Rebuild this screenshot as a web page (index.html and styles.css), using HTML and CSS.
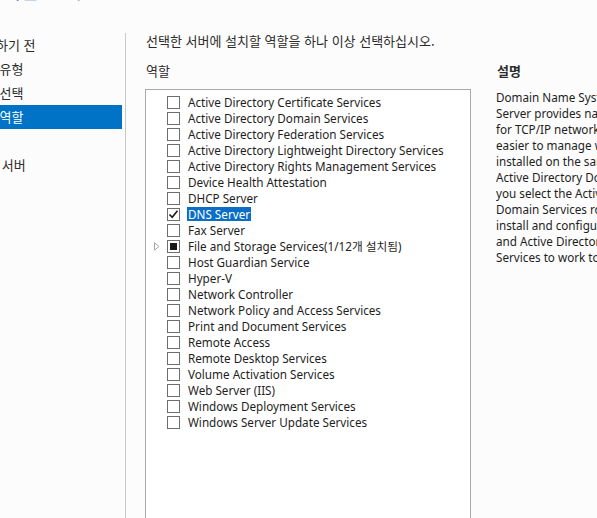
FILE: index.html
```html
<!DOCTYPE html>
<html lang="ko">
<head>
<meta charset="utf-8">
<link rel="stylesheet" href="styles.css">
</head>
<body>
<div class="page">
  <div class="header"><div class="title">서버 역할 선택</div></div>
  <div class="main">
    <nav class="nav">
      <div class="nav-item">시작하기 전</div>
      <div class="nav-item">설치 유형</div>
      <div class="nav-item">서버 선택</div>
      <div class="nav-item active">서버 역할</div>
      <div class="nav-item">기능</div>
      <div class="nav-item">DNS 서버</div>
    </nav>
    <section class="content">
      <div class="intro">선택한 서버에 설치할 역할을 하나 이상 선택하십시오.</div>
      <div class="columns">
        <div class="roles-col">
          <div class="label">역할</div>
          <div class="listbox">
            <div class="row"><span class="exp"></span><span class="cb"></span><span class="txt">Active Directory Certificate Services</span></div>
            <div class="row"><span class="exp"></span><span class="cb"></span><span class="txt">Active Directory Domain Services</span></div>
            <div class="row"><span class="exp"></span><span class="cb"></span><span class="txt">Active Directory Federation Services</span></div>
            <div class="row"><span class="exp"></span><span class="cb"></span><span class="txt">Active Directory Lightweight Directory Services</span></div>
            <div class="row"><span class="exp"></span><span class="cb"></span><span class="txt">Active Directory Rights Management Services</span></div>
            <div class="row"><span class="exp"></span><span class="cb"></span><span class="txt">Device Health Attestation</span></div>
            <div class="row"><span class="exp"></span><span class="cb"></span><span class="txt">DHCP Server</span></div>
            <div class="row"><span class="exp"></span><span class="cb"><svg class="check" width="11" height="11" viewBox="0 0 11 11"><path d="M1.5 5.5 L4.2 8.3 L9.5 1.8" fill="none" stroke="#1a1a1a" stroke-width="1.6"/></svg></span><span class="txt sel">DNS Server</span></div>
            <div class="row"><span class="exp"></span><span class="cb"></span><span class="txt">Fax Server</span></div>
            <div class="row"><span class="exp"><svg width="6" height="9" viewBox="0 0 6 9"><path d="M0.5 0.8 L5 4.5 L0.5 8.2 Z" fill="none" stroke="#a6a6a6" stroke-width="1"/></svg></span><span class="cb"><span class="ind"></span></span><span class="txt">File and Storage Services(1/12개 설치됨)</span></div>
            <div class="row"><span class="exp"></span><span class="cb"></span><span class="txt">Host Guardian Service</span></div>
            <div class="row"><span class="exp"></span><span class="cb"></span><span class="txt">Hyper-V</span></div>
            <div class="row"><span class="exp"></span><span class="cb"></span><span class="txt">Network Controller</span></div>
            <div class="row"><span class="exp"></span><span class="cb"></span><span class="txt">Network Policy and Access Services</span></div>
            <div class="row"><span class="exp"></span><span class="cb"></span><span class="txt">Print and Document Services</span></div>
            <div class="row"><span class="exp"></span><span class="cb"></span><span class="txt">Remote Access</span></div>
            <div class="row"><span class="exp"></span><span class="cb"></span><span class="txt">Remote Desktop Services</span></div>
            <div class="row"><span class="exp"></span><span class="cb"></span><span class="txt">Volume Activation Services</span></div>
            <div class="row"><span class="exp"></span><span class="cb"></span><span class="txt">Web Server (IIS)</span></div>
            <div class="row"><span class="exp"></span><span class="cb"></span><span class="txt">Windows Deployment Services</span></div>
            <div class="row"><span class="exp"></span><span class="cb"></span><span class="txt">Windows Server Update Services</span></div>
          </div>
        </div>
        <div class="desc-col">
          <div class="label bold">설명</div>
          <div class="desc">
            <div>Domain Name System (DNS)</div>
            <div>Server provides name resolution</div>
            <div>for TCP/IP networks. DNS Server is</div>
            <div>easier to manage when it is</div>
            <div>installed on the same server as</div>
            <div>Active Directory Domain Services. If</div>
            <div>you select the Active Directory</div>
            <div>Domain Services role, you can</div>
            <div>install and configure DNS Server</div>
            <div>and Active Directory Domain</div>
            <div>Services to work together.</div>
          </div>
        </div>
      </div>
    </section>
  </div>
</div>
</body>
</html>
```
FILE: styles.css
```css
html, body {
  margin: 0;
  padding: 0;
  background: #fcfcfc;
}
body {
  width: 597px;
  height: 518px;
  overflow: hidden;
  font-family: "Noto Sans", "Noto Sans CJK KR", sans-serif;
  font-size: 11.7px;
  color: #1e1e1e;
}
.page {
  width: 597px;
  height: 518px;
  overflow: hidden;
}
.header {
  display: flow-root;
  height: 33px;
}
.title {
  font-family: "Noto Sans CJK KR", sans-serif;
  font-size: 20px;
  line-height: 20px;
  margin-top: -19px;
  margin-left: -40px;
  color: #1f6fae;
  white-space: nowrap;
}
.main {
  display: flex;
  height: 485px;
}
.nav {
  flex: none;
  border-right: 1px solid #c9c9c9;
  box-sizing: border-box;
  width: 126px;
}
.nav-item {
  height: 24px;
  line-height: 24px;
  margin-right: 3px;
  text-indent: -28px;
  white-space: nowrap;
  font-family: "Noto Sans CJK KR", sans-serif;
  font-size: 13px;
  color: #2b2b2b;
}
.nav-item.active {
  background: #0173c6;
  color: #ffffff;
}
.content {
  flex: 1;
  min-width: 0;
  padding-left: 20px;
}
.intro {
  font-family: "Noto Sans CJK KR", sans-serif;
  font-size: 13px;
  line-height: 16px;
  color: #2b2b2b;
  white-space: nowrap;
}
.columns {
  display: flex;
  gap: 25px;
  margin-top: 14px;
}
.roles-col {
  width: 326px;
  flex: none;
  margin-left: -1px;
}
.label {
  font-family: "Noto Sans CJK KR", sans-serif;
  font-size: 13px;
  line-height: 16px;
  height: 16px;
  margin-bottom: 10px;
  padding-left: 1px;
  color: #2b2b2b;
}
.label.bold {
  font-weight: 700;
}
.listbox {
  border: 1px solid #a9a9a9;
  background: #ffffff;
  height: 460px;
  padding-top: 4px;
  box-sizing: border-box;
}
.row {
  display: flex;
  align-items: center;
  height: 16px;
  padding-left: 4px;
  white-space: nowrap;
}
.exp {
  width: 13px;
  height: 16px;
  margin-right: 4px;
  display: flex;
  align-items: center;
  justify-content: center;
  flex: none;
}
.cb {
  width: 13px;
  height: 13px;
  box-sizing: border-box;
  border: 1px solid #6e6e6e;
  background: #ffffff;
  margin-right: 7px;
  flex: none;
  display: flex;
  align-items: center;
  justify-content: center;
}
.ind {
  width: 7px;
  height: 7px;
  background: #1a1a1a;
}
.txt {
  display: inline-block;
  height: 14px;
  line-height: 14px;
  padding: 0 1px;
  color: #1e1e1e;
}
.txt.sel {
  background: #0a6fc4;
  color: #ffffff;
}
.desc-col {
  flex: 1;
  min-width: 0;
  overflow: hidden;
}
.desc {
  white-space: nowrap;
  line-height: 16px;
  color: #1e1e1e;
}
```
